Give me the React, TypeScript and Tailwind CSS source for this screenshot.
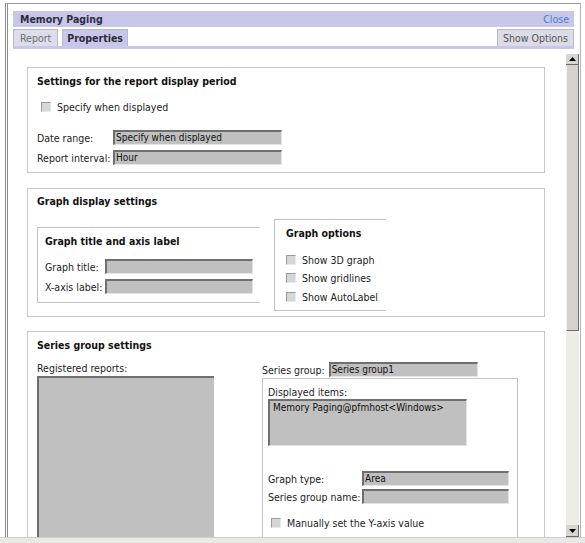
import type { ReactNode } from "react";

const FONT = "font-['DejaVu_Sans_Condensed','DejaVu_Sans',sans-serif]";

function Checkbox() {
  return (
    <span className="inline-block h-[10px] w-[10px] shrink-0 border-t border-l border-t-[#9a9a9a] border-l-[#9a9a9a] border-r border-b border-r-[#e8e8e8] border-b-[#e8e8e8] bg-[#d6d6d6]" />
  );
}

function Field({ value = "", w }: { value?: string; w: string }) {
  return (
    <div
      className={`${w} h-[15px] shrink-0 overflow-hidden whitespace-nowrap border-t-2 border-l-2 border-t-[#6f6f6f] border-l-[#6f6f6f] border-r border-b border-r-[#e4e4e4] border-b-[#e4e4e4] bg-[#c0c0c0] pl-[1px] text-[10px] leading-[12px] text-[#111]`}
    >
      {value}
    </div>
  );
}

function Label({ w, children }: { w: string; children: ReactNode }) {
  return <span className={`${w} shrink-0 whitespace-nowrap`}>{children}</span>;
}

function Section({ title, className = "", children }: { title: string; className?: string; children: ReactNode }) {
  return (
    <div className={`w-[518px] border border-[#c9c9c9] pl-[9px] ${className}`}>
      <div className="text-[10.5px] font-bold leading-[14px] text-[#111]">{title}</div>
      {children}
    </div>
  );
}

function CheckRow({ label, className = "" }: { label: string; className?: string }) {
  return (
    <div className={`flex items-center gap-[6px] whitespace-nowrap ${className}`}>
      <Checkbox />
      <span>{label}</span>
    </div>
  );
}

export default function App() {
  return (
    <div className={`h-[543px] w-[585px] overflow-hidden bg-white pt-[3px] pl-[5px] text-[10.5px] leading-[14px] text-[#222] ${FONT}`}>
      <div className="flex h-[534px] w-[576px] flex-col border-t border-r border-t-[#9c9c9c] border-r-[#b4b4b4] border-l-[3px] border-l-[#8c8c8c] border-double">
        {/* header */}
        <div className="ml-[5px] mr-[6px] mt-[7px]">
          <div className="flex h-[16px] items-center justify-between bg-[#c7c7e9] pl-[7px] pr-[5px]">
            <span className="font-bold text-[#2c2c3c]">Memory Paging</span>
            <span className="text-[#4a7cc4]">Close</span>
          </div>
          <div className="mt-[2px] flex h-[17px] items-stretch justify-between">
            <div className="flex items-stretch gap-[4px]">
              <div className="flex items-center border-t border-l border-r border-[#b8b8d0] bg-[#dcdcea] px-[6px] text-[#707070]">Report</div>
              <div className="flex items-center border-t border-l border-r border-[#b8b8d0] bg-[#c7c7e9] px-[4px] font-bold text-[#2c2c3c]">Properties</div>
            </div>
            <div className="flex items-center border-t border-l border-r border-[#b8b8d0] bg-[#dcdce8] px-[5px] text-[#555]">Show Options</div>
          </div>
          <div className="h-[3px] bg-[#c7c7e9]" />
        </div>

        {/* content */}
        <div className="flex min-h-0 flex-1">
          <div className="min-w-0 flex-1 overflow-hidden pl-[19px] pt-[18px]">
            <Section title="Settings for the report display period" className="pt-[6px] pb-[6px] h-[106px]">
              <CheckRow label="Specify when displayed" className="mt-[12px] ml-[4px]" />
              <div className="mt-[16px] flex items-center">
                <Label w="w-[76px]">Date range:</Label>
                <Field w="w-[169px]" value="Specify when displayed" />
              </div>
              <div className="mt-[5px] flex items-center">
                <Label w="w-[76px]">Report interval:</Label>
                <Field w="w-[169px]" value="Hour" />
              </div>
            </Section>

            <Section title="Graph display settings" className="mt-[15px] pt-[5px] h-[129px]">
              <div className="mt-[11px] flex items-center gap-[14px]">
                <div className="h-[76px] w-[223px] border-t border-l border-b border-[#c4c4c4] pl-[7px] pt-[6px]">
                  <div className="font-bold text-[#111]">Graph title and axis label</div>
                  <div className="mt-[11px] flex items-center">
                    <Label w="w-[60px]">Graph title:</Label>
                    <Field w="w-[148px]" />
                  </div>
                  <div className="mt-[5px] flex items-center">
                    <Label w="w-[60px]">X-axis label:</Label>
                    <Field w="w-[148px]" />
                  </div>
                </div>
                <div className="h-[92px] w-[112px] border-t border-l border-b border-[#c4c4c4] pl-[11px] pt-[6px]">
                  <div className="font-bold text-[#111]">Graph options</div>
                  <CheckRow label="Show 3D graph" className="mt-[13px]" />
                  <CheckRow label="Show gridlines" className="mt-[4px]" />
                  <CheckRow label="Show AutoLabel" className="mt-[5px]" />
                </div>
              </div>
            </Section>

            <Section title="Series group settings" className="mt-[14px] pt-[6px] h-[260px]">
              <div className="mt-[9px] flex gap-[48px]">
                <div className="flex w-[177px] flex-col">
                  <span>Registered reports:</span>
                  <div className="mt-[1px] h-[200px] border-t-2 border-l-2 border-t-[#6f6f6f] border-l-[#6f6f6f] bg-[#c0c0c0]" />
                </div>
                <div className="flex flex-col">
                  <div className="mt-[1px] flex items-center gap-[4px]">
                    <span className="whitespace-nowrap">Series group:</span>
                    <Field w="w-[149px]" value="Series group1" />
                  </div>
                  <div className="mt-[1px] h-[200px] w-[256px] border-t border-l border-r border-[#c4c4c4] pl-[5px] pt-[6px]">
                    <div>Displayed items:</div>
                    <div className="h-[47px] w-[199px] border-t-2 border-l-2 border-t-[#6f6f6f] border-l-[#6f6f6f] border-r border-b border-r-[#e4e4e4] border-b-[#e4e4e4] bg-[#c0c0c0] pl-[3px] pt-[1px] text-[10px] leading-[12px] text-[#111]">
                      Memory Paging@pfmhost&lt;Windows&gt;
                    </div>
                    <div className="mt-[25px] flex items-center">
                      <Label w="w-[94px]">Graph type:</Label>
                      <Field w="w-[147px]" value="Area" />
                    </div>
                    <div className="mt-[3px] flex items-center">
                      <Label w="w-[94px]">Series group name:</Label>
                      <Field w="w-[147px]" />
                    </div>
                    <CheckRow label="Manually set the Y-axis value" className="mt-[12px] ml-[3px] gap-[5px]" />
                  </div>
                </div>
              </div>
            </Section>
          </div>

          {/* scrollbar */}
          <div className="mr-[1px] mt-[5px] flex w-[13px] flex-col bg-[#eeece7]">
            <div className="flex h-[11px] items-center justify-center border-r border-b border-r-[#6a6a6a] border-b-[#6a6a6a] bg-[#d8d5cf]">
              <svg width="7" height="4" viewBox="0 0 7 4"><path d="M3.5 0L7 4H0z" fill="#000" /></svg>
            </div>
            <div className="h-[266px] border-r border-b border-r-[#6a6a6a] border-b-[#6a6a6a] border-l border-l-[#f4f4f4] bg-[#d6d3ce]" />
            <div className="flex-1" />
            <div className="flex h-[12px] items-center justify-center border-r border-b border-r-[#6a6a6a] border-b-[#6a6a6a] bg-[#d8d5cf]">
              <svg width="7" height="4" viewBox="0 0 7 4"><path d="M0 0H7L3.5 4z" fill="#000" /></svg>
            </div>
          </div>
        </div>
      </div>
      <div className="-ml-[5px] h-[6px] border-t border-[#cfcfcf] bg-[#ebe9e3]" />
    </div>
  );
}
